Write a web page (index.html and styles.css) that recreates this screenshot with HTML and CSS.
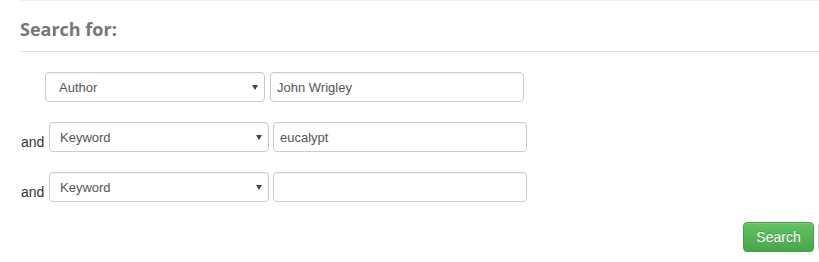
FILE: index.html
```html
<!DOCTYPE html>
<html lang="en">
<head>
<meta charset="utf-8">
<title>Search</title>
<link rel="stylesheet" href="styles.css">
</head>
<body>
<div class="panel">
  <h3 class="panel-title">Search for:</h3>
  <form class="search-form">
    <div class="row">
      <span class="conj conj-first"></span>
      <div class="select-wrap">
        <select class="field select select-first">
          <option>Author</option>
          <option>Keyword</option>
          <option>Title</option>
        </select>
      </div>
      <input class="field text" type="text" value="John Wrigley">
    </div>
    <div class="row row-and">
      <span class="conj">and</span>
      <div class="select-wrap">
        <select class="field select">
          <option>Keyword</option>
          <option>Author</option>
          <option>Title</option>
        </select>
      </div>
      <input class="field text" type="text" value="eucalypt">
    </div>
    <div class="row row-and">
      <span class="conj">and</span>
      <div class="select-wrap">
        <select class="field select">
          <option>Keyword</option>
          <option>Author</option>
          <option>Title</option>
        </select>
      </div>
      <input class="field text" type="text" value="">
    </div>
    <div class="actions">
      <button type="button" class="btn btn-success">Search</button>
      <span class="btn btn-default" aria-hidden="true"></span>
    </div>
  </form>
</div>
</body>
</html>
```
FILE: styles.css
```css
html, body {
  margin: 0;
  padding: 0;
  background: #fff;
  overflow: hidden;
}
body {
  font-family: "Liberation Sans", Arial, sans-serif;
  font-size: 14px;
  color: #333;
}
.panel {
  margin-left: 20px;
  width: 1000px;
  border-top: 1px solid #eef0f0;
}
.panel-title {
  margin: 0;
  padding: 16px 0 10px;
  font-family: "Open Sans", sans-serif;
  font-weight: 700;
  font-size: 18px;
  line-height: 24px;
  color: #777;
  border-bottom: 1px solid #e3e3e3;
}
.search-form {
  padding-top: 20px;
  display: flex;
  flex-direction: column;
  gap: 20px;
}
.row {
  display: flex;
  align-items: stretch;
}
.conj {
  width: 28px;
  padding-left: 1px;
  align-self: flex-end;
  line-height: 14px;
  margin-bottom: 3px;
  font-size: 14px;
  color: #333;
}
.conj-first {
  width: 25px;
  padding-left: 0;
}
.select-wrap {
  position: relative;
  width: 220px;
  height: 30px;
  margin-right: 5px;
}
.row-and .select-wrap {
  margin-right: 4px;
}
.select-wrap::after {
  content: "";
  position: absolute;
  right: 7px;
  top: 13px;
  border-left: 3px solid transparent;
  border-right: 3px solid transparent;
  border-top: 5px solid #444;
  pointer-events: none;
}
.field {
  box-sizing: border-box;
  height: 30px;
  margin: 0;
  border: 1px solid #ccc;
  border-radius: 4px;
  background: #fff;
  font-family: "Liberation Sans", Arial, sans-serif;
  font-size: 13px;
  color: #555;
  box-shadow: inset 0 1px 1px rgba(0, 0, 0, 0.04);
  outline: none;
}
.select {
  -webkit-appearance: none;
  appearance: none;
  width: 220px;
  padding: 0 20px 0 10px;
}
.select-first {
  padding-left: 13px;
}
.text {
  width: 254px;
  padding: 0 6px;
}
.actions {
  display: flex;
  gap: 4px;
  padding-left: 723px;
}
.btn {
  box-sizing: border-box;
  display: block;
  height: 30px;
  padding: 0 12px;
  border-radius: 4px;
  font-family: "Liberation Sans", Arial, sans-serif;
  font-size: 14px;
  line-height: 28px;
  cursor: pointer;
}
.btn-success {
  width: 71px;
  color: #fff;
  border: 1px solid #45a045;
  background: linear-gradient(to bottom, #62c462 0%, #4aa54a 100%);
  text-shadow: 0 -1px 0 rgba(0, 0, 0, 0.2);
  box-shadow: inset 0 1px 0 rgba(255, 255, 255, 0.15), 0 1px 1px rgba(0, 0, 0, 0.075);
}
.btn-default {
  width: 60px;
  border: 1px solid #ccc;
  background: linear-gradient(to bottom, #fff 0%, #e0e0e0 100%);
}
```
